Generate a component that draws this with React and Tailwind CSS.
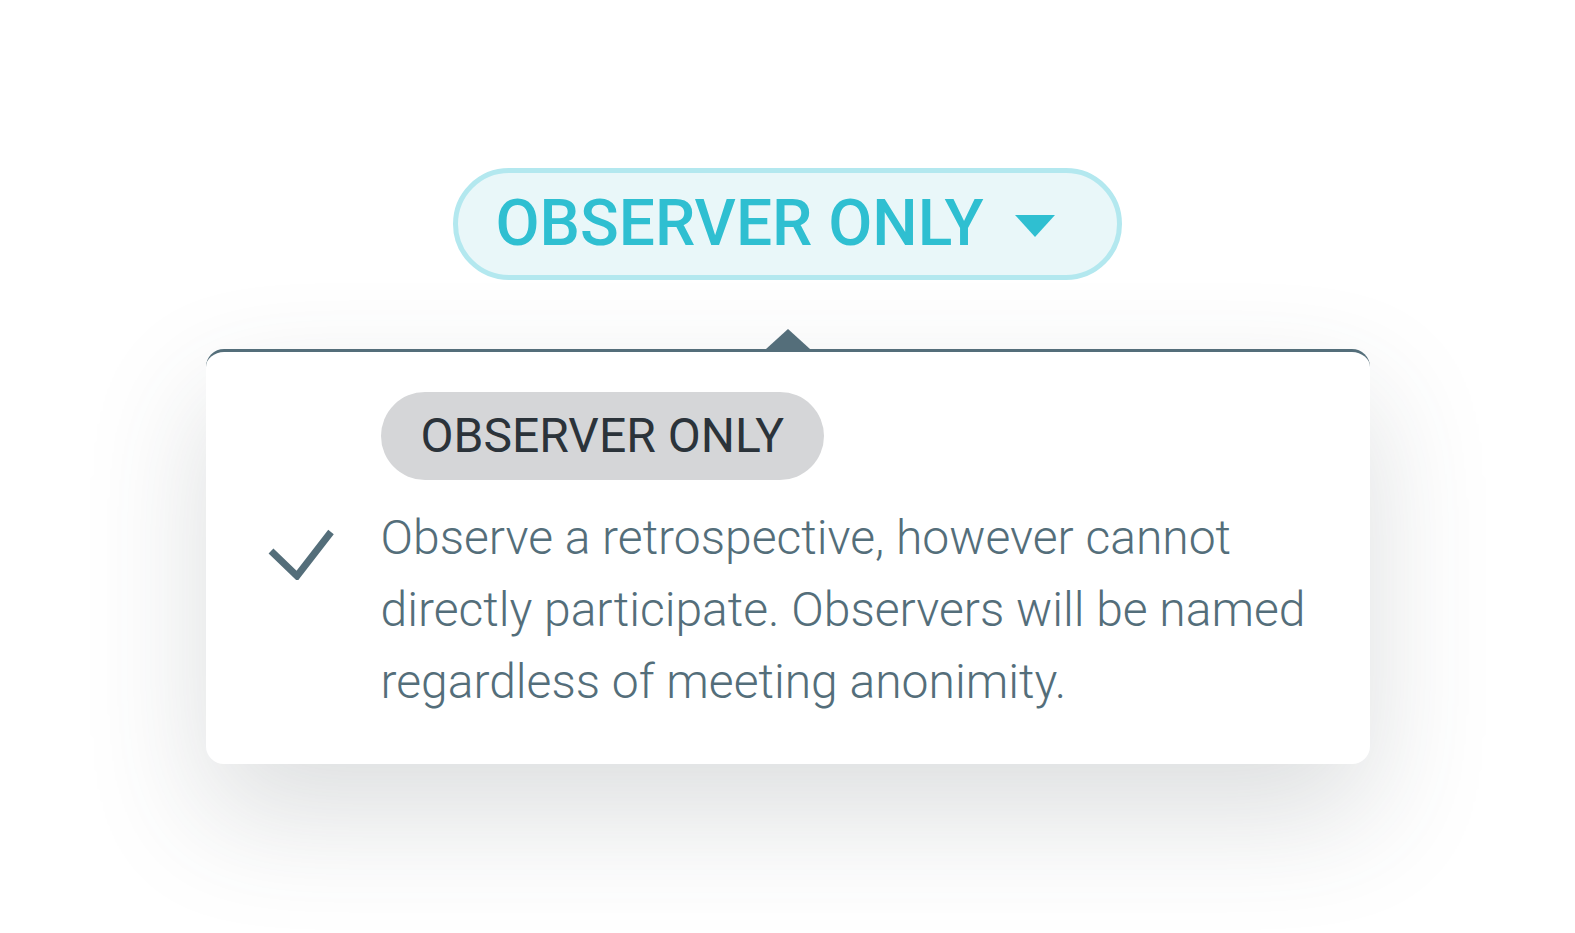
import React from 'react';

const CheckIcon = () => (
  <svg width="66" height="52" viewBox="0 0 66 52" fill="none">
    <path d="M3 23 L29 48 L63 4" stroke="#546e7a" strokeWidth="7" />
  </svg>
);

const Caret = () => (
  <svg width="44" height="20" viewBox="0 0 44 20">
    <path d="M0 20 L22 0 L44 20 Z" fill="#546e7a" />
  </svg>
);

export default function App() {
  return (
    <div className="min-h-screen bg-white flex flex-col items-center pt-[168px] font-['Roboto',sans-serif]">
      <button className="h-[112px] rounded-full border-[5px] border-[#b3e8ef] bg-[#e9f7f9] pl-[38px] pr-[62px] flex items-center gap-[32px]">
        <span className="text-[64px] font-medium leading-none text-[#2fbfd1]">OBSERVER ONLY</span>
        <svg width="40" height="22" viewBox="0 0 40 22" className="mt-[4px]">
          <path d="M0 0 L40 0 L20 22 Z" fill="#2fbfd1" />
        </svg>
      </button>

      <div className="relative mt-[69px] w-[1164px]">
        <div className="absolute left-1/2 -translate-x-1/2 -top-[20px]">
          <Caret />
        </div>
        <div className="rounded-[18px] border-t-[3px] border-[#546e7a] bg-white shadow-[0_50px_120px_rgba(60,70,80,0.18)] pt-[40px] pb-[46px] pl-[62px] pr-[40px] flex">
          <div className="w-[113px] shrink-0 pt-[136px]">
            <CheckIcon />
          </div>
          <div className="flex flex-col items-start">
            <span className="h-[88px] rounded-full bg-[#d5d6d8] px-[40px] flex items-center text-[48px] leading-none text-[#2b333a]">OBSERVER ONLY</span>
            <p className="mt-[22px] text-[48px] font-light leading-[72px] text-[#546e7a] max-w-[960px]">
              Observe a retrospective, however cannot directly participate. Observers will be named regardless of meeting anonimity.
            </p>
          </div>
        </div>
      </div>
    </div>
  );
}
